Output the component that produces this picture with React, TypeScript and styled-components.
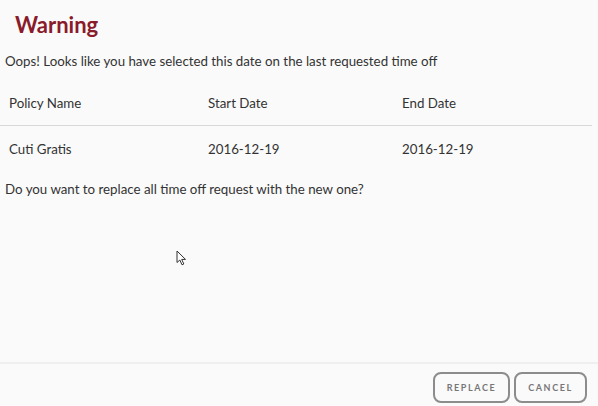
import React from "react";
import styled, { createGlobalStyle } from "styled-components";

const Global = createGlobalStyle`
  html, body { margin: 0; padding: 0; background: #fafafa; }
  body { font-family: Lato, "Open Sans", sans-serif; color: #333; }
`;

const Dialog = styled.div`
  position: relative;
  width: 598px;
  height: 406px;
  display: flex;
  flex-direction: column;
  background: #fafafa;
  overflow: hidden;
`;

const Content = styled.div`
  flex: 1;
  display: flex;
  flex-direction: column;
`;

const Title = styled.h1`
  margin: 0;
  padding: 11px 0 0 15px;
  font-size: 22px;
  line-height: 28px;
  font-weight: 700;
  color: #8a1b2b;
`;

const Message = styled.p<{ $top: number }>`
  margin: 0;
  padding: 0 0 0 5px;
  font-size: 13.3px;
  line-height: 18px;
  color: #333;
  margin-top: ${(p) => p.$top}px;
`;

const Table = styled.div`
  width: 592px;
  margin-top: 10px;
`;

const Row = styled.div<{ $header?: boolean }>`
  display: grid;
  grid-template-columns: 199px 194px 1fr;
  padding: 0 0 0 9px;
  height: 45px;
  align-items: center;
  font-size: 13.3px;
  color: #333;
  border-bottom: ${(p) => (p.$header ? "1px solid #d8d8d8" : "none")};
`;

const Cell = styled.div``;

const Footer = styled.div`
  border-top: 2px solid #efefef;
  height: 44px;
  display: flex;
  justify-content: flex-end;
  align-items: flex-start;
  gap: 4px;
  padding: 8px 11px 0 0;
  box-sizing: border-box;
`;

const Button = styled.button<{ $w: number }>`
  width: ${(p) => p.$w}px;
  height: 31px;
  border: 2px solid #8c8c8c;
  border-radius: 8px;
  background: #fafafa;
  color: #777;
  font-family: Lato, sans-serif;
  font-size: 9px;
  font-weight: 700;
  letter-spacing: 1.6px;
  padding: 0;
`;

const Cursor = styled.svg`
  position: absolute;
  left: 176px;
  top: 250px;
  pointer-events: none;
`;

export default function App() {
  return (
    <>
      <Global />
      <Dialog>
        <Content>
          <Title>Warning</Title>
          <Message $top={13}>Oops! Looks like you have selected this date on the last requested time off</Message>
          <Table>
            <Row $header>
              <Cell>Policy Name</Cell>
              <Cell>Start Date</Cell>
              <Cell>End Date</Cell>
            </Row>
            <Row>
              <Cell>Cuti Gratis</Cell>
              <Cell>2016-12-19</Cell>
              <Cell>2016-12-19</Cell>
            </Row>
          </Table>
          <Message $top={9}>Do you want to replace all time off request with the new one?</Message>
        </Content>
        <Footer>
          <Button $w={77}>REPLACE</Button>
          <Button $w={73}>CANCEL</Button>
        </Footer>
        <Cursor width="12" height="17" viewBox="0 0 12 17">
          <path
            d="M1 1 L1 12.5 L3.8 10 L6 14.8 L7.8 14 L5.7 9.4 L9.5 9.4 Z"
            fill="#fff"
            stroke="#333"
            strokeWidth="1"
            strokeLinejoin="round"
          />
        </Cursor>
      </Dialog>
    </>
  );
}
